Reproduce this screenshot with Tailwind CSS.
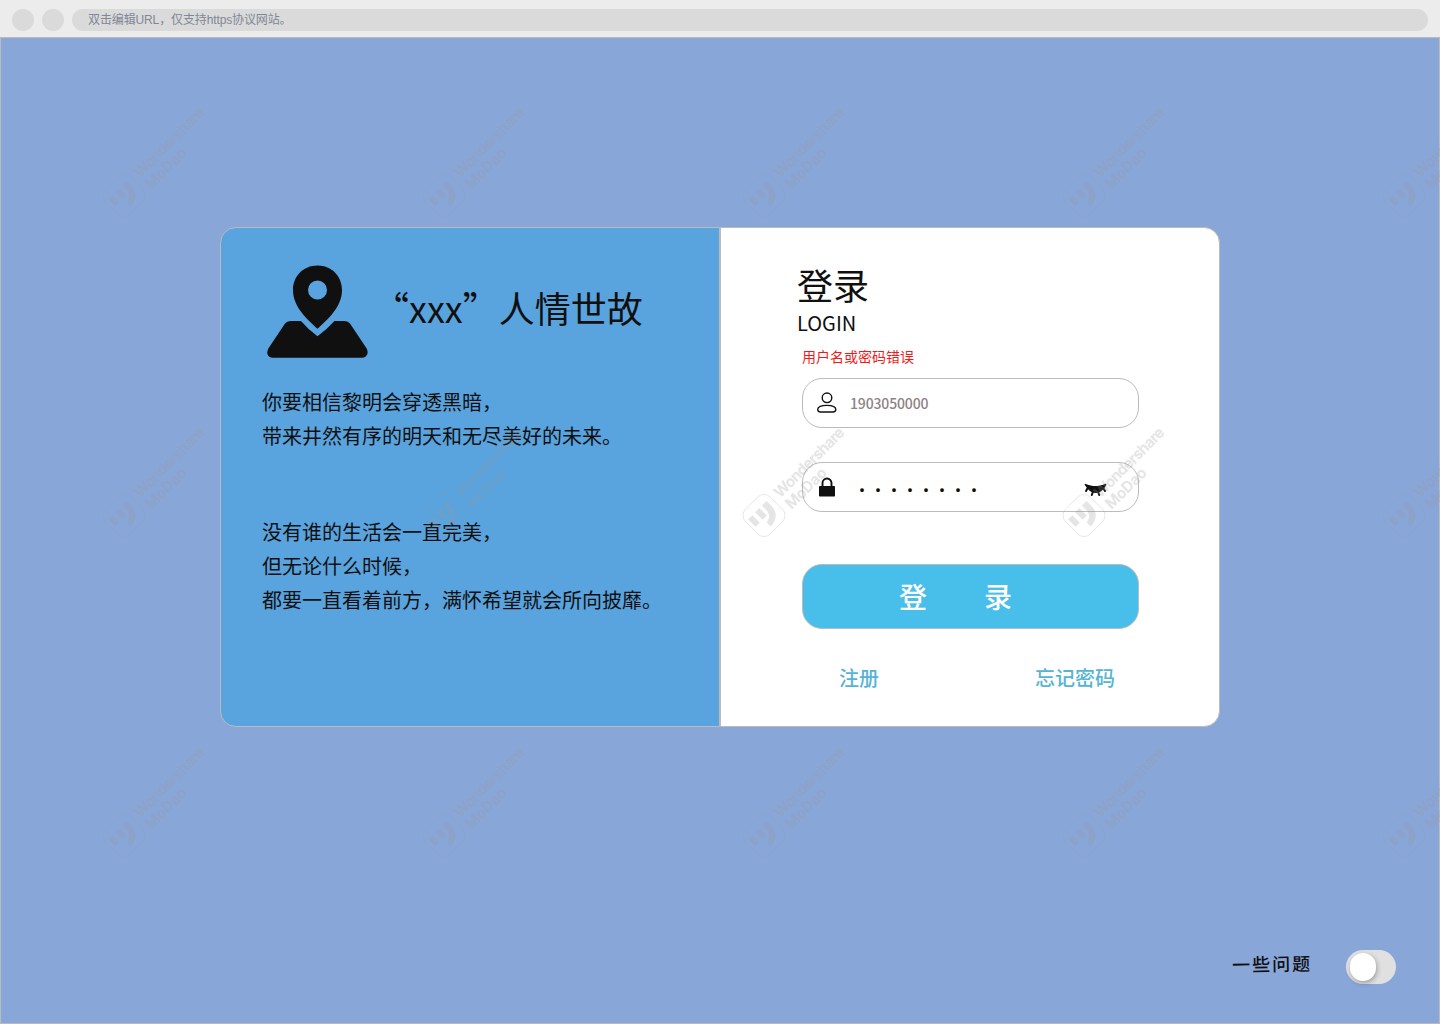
<!DOCTYPE html>
<html lang="zh-CN">
<head>
<meta charset="utf-8">
<title>登录</title>
<script src="https://cdn.jsdelivr.net/npm/@tailwindcss/browser@4"></script>
</head>
<body class="relative flex h-[1024px] w-[1440px] flex-col overflow-hidden bg-[#ececec] font-['Noto_Sans_CJK_SC',sans-serif] text-[#101010]">
  <header class="flex h-[37px] shrink-0 items-center gap-2 px-3 pt-[3px]">
    <span class="size-[22px] rounded-full bg-[#dadada]"></span>
    <span class="size-[22px] rounded-full bg-[#dadada]"></span>
    <div class="flex h-[22px] flex-1 items-center rounded-full bg-[#dadada] px-4 font-['Liberation_Sans','Noto_Sans_CJK_SC',sans-serif] text-xs tracking-[-0.12px] text-[#7f8796]">双击编辑URL，仅支持https协议网站。</div>
  </header>

  <main class="flex flex-1 flex-col border border-[#bbb] bg-[#89a6d9]">
    <div class="mx-auto mt-[189px] flex h-[500px] w-[1000px] shrink-0">
      <section class="w-[500px] rounded-l-2xl border border-[#bbb] bg-[#59a3de] pl-[41px]">
        <div class="flex h-[159px] pt-[36px]">
          <svg class="ml-[5px] mt-px h-[94px] w-[102px] shrink-0" viewBox="0 0 102 94" fill="#101010">
            <path fill-rule="evenodd" d="M50.500 .500C36 .500 26 11.500 26 25C26 42 40 54 50.500 63.800C61 54 75 42 75 25C75 11.500 65 .500 50.500 .500ZM50.500 15.500a9.500 9.500 0 1 1 0 19a9.500 9.500 0 0 1 0-19Z"/>
            <path d="M24 56H34Q41 64.300 50.500 71.300Q60 64.300 67.500 56H77Q81 56 83.500 59.300L99.500 83.300Q101.500 86.800 100 89.800Q98.500 92.700 95 92.700H6Q2 92.700 .700 89.800Q-.500 86.800 1.500 83.300L17.500 59.300Q20 56 24 56Z"/>
          </svg>
          <h1 class="ml-[4px] mt-[17px] whitespace-nowrap text-[36px] leading-[52px]">“xxx”人情世故</h1>
        </div>
        <div class="-mt-[2px] whitespace-nowrap text-xl leading-[34px]">
          <p>你要相信黎明会穿透黑暗，<br>带来井然有序的明天和无尽美好的未来。</p>
          <p class="mt-[62px]">没有谁的生活会一直完美，<br>但无论什么时候，<br>都要一直看着前方，满怀希望就会所向披靡。</p>
        </div>
      </section>

      <section class="w-[500px] rounded-r-2xl border border-[#bbb] bg-white pl-[81px] pr-[80px] pt-[36px]">
        <h2 class="-ml-[5px] h-[44px] text-[36px] leading-[40px]">登录</h2>
        <p class="-ml-[5px] h-[30px] text-xl leading-[29px]">LOGIN</p>
        <p class="mt-[8px] text-sm leading-5 text-[#ef1b1b]">用户名或密码错误</p>

        <div class="mt-[12px] flex h-[50px] w-[337px] items-center rounded-[20px] border border-[#bbb] pl-[13px]">
          <svg class="size-[22px]" viewBox="0 0 22 22" fill="none" stroke="#101010" stroke-width="1.400">
            <circle cx="11" cy="5.800" r="4.800"/>
            <path d="M4.500 20H17Q19.800 20 19.800 17.600C19.800 14.600 16 13.400 10.800 13.400S1.700 14.600 1.700 17.600Q1.700 20 4.500 20Z"/>
          </svg>
          <span class="ml-[12px] text-sm font-medium tracking-[-0.15px] text-[#8b8383]">1903050000</span>
        </div>

        <div class="mt-[34px] flex h-[50px] w-[337px] items-center rounded-[20px] border border-[#bbb] pl-[16px] pr-[31px]">
          <svg class="h-[20px] w-[16px]" viewBox="0 0 16 20">
            <path d="M3.500 10V6a4.500 4.500 0 0 1 9 0v4" fill="none" stroke="#101010" stroke-width="1.900"/>
            <rect y="9" width="16" height="10.500" rx=".7" fill="#101010"/>
          </svg>
          <span class="ml-[19px] mt-[3px] text-base font-medium">········</span>
          <svg class="ml-auto mt-[5px] h-[14px] w-[23px]" viewBox="0 0 23 14" fill="#101010" stroke="#101010" stroke-linecap="round">
            <path stroke="none" d="M.500 1.600C1 .500 1.700 .500 2.500 1.200C8 3.600 15 3.600 20.500 1.200C21.400 .500 22.300 1 22.300 1.900C19 7.500 15.500 10 11.500 10S4.300 7.500 .500 1.600Z"/>
            <path stroke-width="2" d="M4 4.500L2 8M9 8.500L7.800 12M14 8.500L15.200 12M18.900 4.500L21 8"/>
          </svg>
        </div>

        <button class="mt-[52px] block h-[65px] w-[337px] whitespace-pre rounded-[20px] border border-[#bbb] bg-[#48beeb] pr-[30px] pb-[2px] text-[28px] font-medium text-white"><span>登</span><span class="ml-[57px]">录</span></button>

        <div class="mt-[34px] flex justify-between pl-[37px] pr-[24px] text-xl leading-[30px] font-medium text-[#56b4d3]">
          <a>注册</a>
          <a>忘记密码</a>
        </div>
      </section>
    </div>

    <div class="mt-auto mb-[39px] mr-[43px] flex items-center justify-end">
      <span class="mr-[34px] mb-[8px] -rotate-1 font-['Noto_Sans_CJK_SC',cursive] text-[18px] leading-[26px] font-medium tracking-[2px]">一些问题</span>
      <span class="flex h-[34px] w-[50px] items-center rounded-full bg-[#e0e0e0] pl-[4px]">
        <span class="h-[28px] w-[26px] rounded-full bg-white shadow-[1px_2px_5px_rgba(0,0,0,0.3)]"></span>
      </span>
    </div>
  </main>

  <!-- repeating brand watermark over the canvas -->
  <svg class="pointer-events-none absolute inset-0" width="1440" height="1024">
    <defs>
      <pattern id="mark" width="320" height="320" patternUnits="userSpaceOnUse">
        <g transform="translate(124 195.500) rotate(-45)" fill="#959595" opacity=".25">
          <rect x="-17.500" y="-17.500" width="35" height="35" rx="9" fill="none" stroke="#959595" stroke-width=".9"/>
          <rect x="-14" y="-8.500" width="6" height="10.500"/>
          <rect x="-4" y="-8.500" width="6" height="10.500"/>
          <path d="M5.500 -8.500H12V-1C12 7 6 12.500 -3 12.500V6.500C2 6.500 5.500 3 5.500 -2Z"/>
          <text x="23.500" y="-.5" font-family="Inter, sans-serif" font-size="15" font-weight="600" textLength="92" stroke="#959595" stroke-width=".3">Wondershare</text>
          <text x="23.500" y="15.500" font-family="Inter, sans-serif" font-size="15" font-weight="600" textLength="51" stroke="#959595" stroke-width=".3">MoDao</text>
        </g>
      </pattern>
    </defs>
    <rect y="38" width="1440" height="986" fill="url(#mark)"/>
  </svg>
</body>
</html>
